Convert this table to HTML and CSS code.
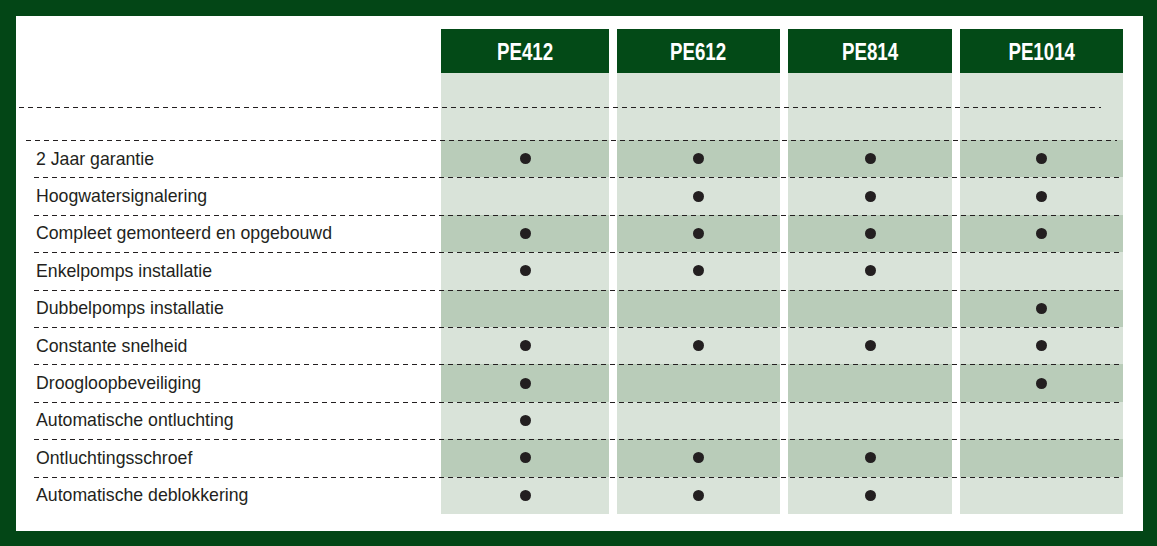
FILE: index.html
```html
<!DOCTYPE html>
<html lang="nl">
<head>
<meta charset="utf-8">
<title>PE vergelijking</title>
<link rel="stylesheet" href="styles.css">
</head>
<body>
<div class="panel">
  <div class="row head">
    <div class="label"></div>
    <div class="hd"><span class="hdtext">PE412</span></div>
    <div class="hd"><span class="hdtext">PE612</span></div>
    <div class="hd"><span class="hdtext">PE814</span></div>
    <div class="hd"><span class="hdtext">PE1014</span></div>
  </div>
  <div class="row spacer">
    <div class="label"></div>
    <div class="cell"></div><div class="cell"></div><div class="cell"></div><div class="cell"></div>
  </div>
  <div class="row feat first dark">
    <div class="label">2 Jaar garantie</div>
    <div class="cell"><i class="dot"></i></div><div class="cell"><i class="dot"></i></div><div class="cell"><i class="dot"></i></div><div class="cell"><i class="dot"></i></div>
  </div>
  <div class="row feat">
    <div class="label">Hoogwatersignalering</div>
    <div class="cell"></div><div class="cell"><i class="dot"></i></div><div class="cell"><i class="dot"></i></div><div class="cell"><i class="dot"></i></div>
  </div>
  <div class="row feat dark">
    <div class="label">Compleet gemonteerd en opgebouwd</div>
    <div class="cell"><i class="dot"></i></div><div class="cell"><i class="dot"></i></div><div class="cell"><i class="dot"></i></div><div class="cell"><i class="dot"></i></div>
  </div>
  <div class="row feat">
    <div class="label">Enkelpomps installatie</div>
    <div class="cell"><i class="dot"></i></div><div class="cell"><i class="dot"></i></div><div class="cell"><i class="dot"></i></div><div class="cell"></div>
  </div>
  <div class="row feat dark">
    <div class="label">Dubbelpomps installatie</div>
    <div class="cell"></div><div class="cell"></div><div class="cell"></div><div class="cell"><i class="dot"></i></div>
  </div>
  <div class="row feat">
    <div class="label">Constante snelheid</div>
    <div class="cell"><i class="dot"></i></div><div class="cell"><i class="dot"></i></div><div class="cell"><i class="dot"></i></div><div class="cell"><i class="dot"></i></div>
  </div>
  <div class="row feat dark">
    <div class="label">Droogloopbeveiliging</div>
    <div class="cell"><i class="dot"></i></div><div class="cell"></div><div class="cell"></div><div class="cell"><i class="dot"></i></div>
  </div>
  <div class="row feat">
    <div class="label">Automatische ontluchting</div>
    <div class="cell"><i class="dot"></i></div><div class="cell"></div><div class="cell"></div><div class="cell"></div>
  </div>
  <div class="row feat dark">
    <div class="label">Ontluchtingsschroef</div>
    <div class="cell"><i class="dot"></i></div><div class="cell"><i class="dot"></i></div><div class="cell"><i class="dot"></i></div><div class="cell"></div>
  </div>
  <div class="row feat">
    <div class="label">Automatische deblokkering</div>
    <div class="cell"><i class="dot"></i></div><div class="cell"><i class="dot"></i></div><div class="cell"><i class="dot"></i></div><div class="cell"></div>
  </div>
</div>
</body>
</html>
```

FILE: styles.css
```css
html, body {
  margin: 0;
  padding: 0;
}
body {
  background: #034616;
  width: 1157px;
  height: 546px;
  overflow: hidden;
  font-family: "Liberation Sans", Arial, sans-serif;
}
.panel {
  box-sizing: border-box;
  width: 1127px;
  height: 515px;
  margin: 16px 0 0 16px;
  background: #ffffff;
  padding-top: 13px;
}
.row {
  display: grid;
  grid-template-columns: 417px 168px 163px 164px 163px;
  column-gap: 8px;
  position: relative;
}
.head {
  height: 44px;
}
.hd {
  background: #034a17;
  display: flex;
  align-items: center;
  justify-content: center;
}
.hdtext {
  display: inline-block;
  color: #ffffff;
  font-family: "Liberation Sans", Arial, sans-serif;
  font-weight: bold;
  font-size: 24px;
  transform: scaleX(0.78);
  margin-top: 2px;
}
.cell {
  background: #d9e3d9;
  display: flex;
  align-items: center;
  justify-content: center;
}
.spacer {
  height: 67px;
}
.spacer::before {
  content: "";
  position: absolute;
  left: 3px;
  width: 1082px;
  top: 34px;
  height: 1px;
  background: repeating-linear-gradient(to right, #231f20 0 5px, transparent 5px 9px);
}
.feat {
  height: 37.4px;
}
.feat::before {
  content: "";
  position: absolute;
  left: 18px;
  right: 20px;
  top: 0;
  height: 1px;
  background: repeating-linear-gradient(to right, #231f20 0 5px, transparent 5px 9px);
  z-index: 1;
}
.feat.first::before {
  left: 10px;
  right: 26px;
}
.dark .cell {
  background: #b9ccb9;
}
.label {
  display: flex;
  align-items: center;
  padding-left: 20px;
  padding-top: 1px;
  font-size: 17.7px;
  color: #231f20;
  white-space: nowrap;
}
.dot {
  display: block;
  width: 11px;
  height: 11px;
  border-radius: 50%;
  background: #231f20;
}
```
